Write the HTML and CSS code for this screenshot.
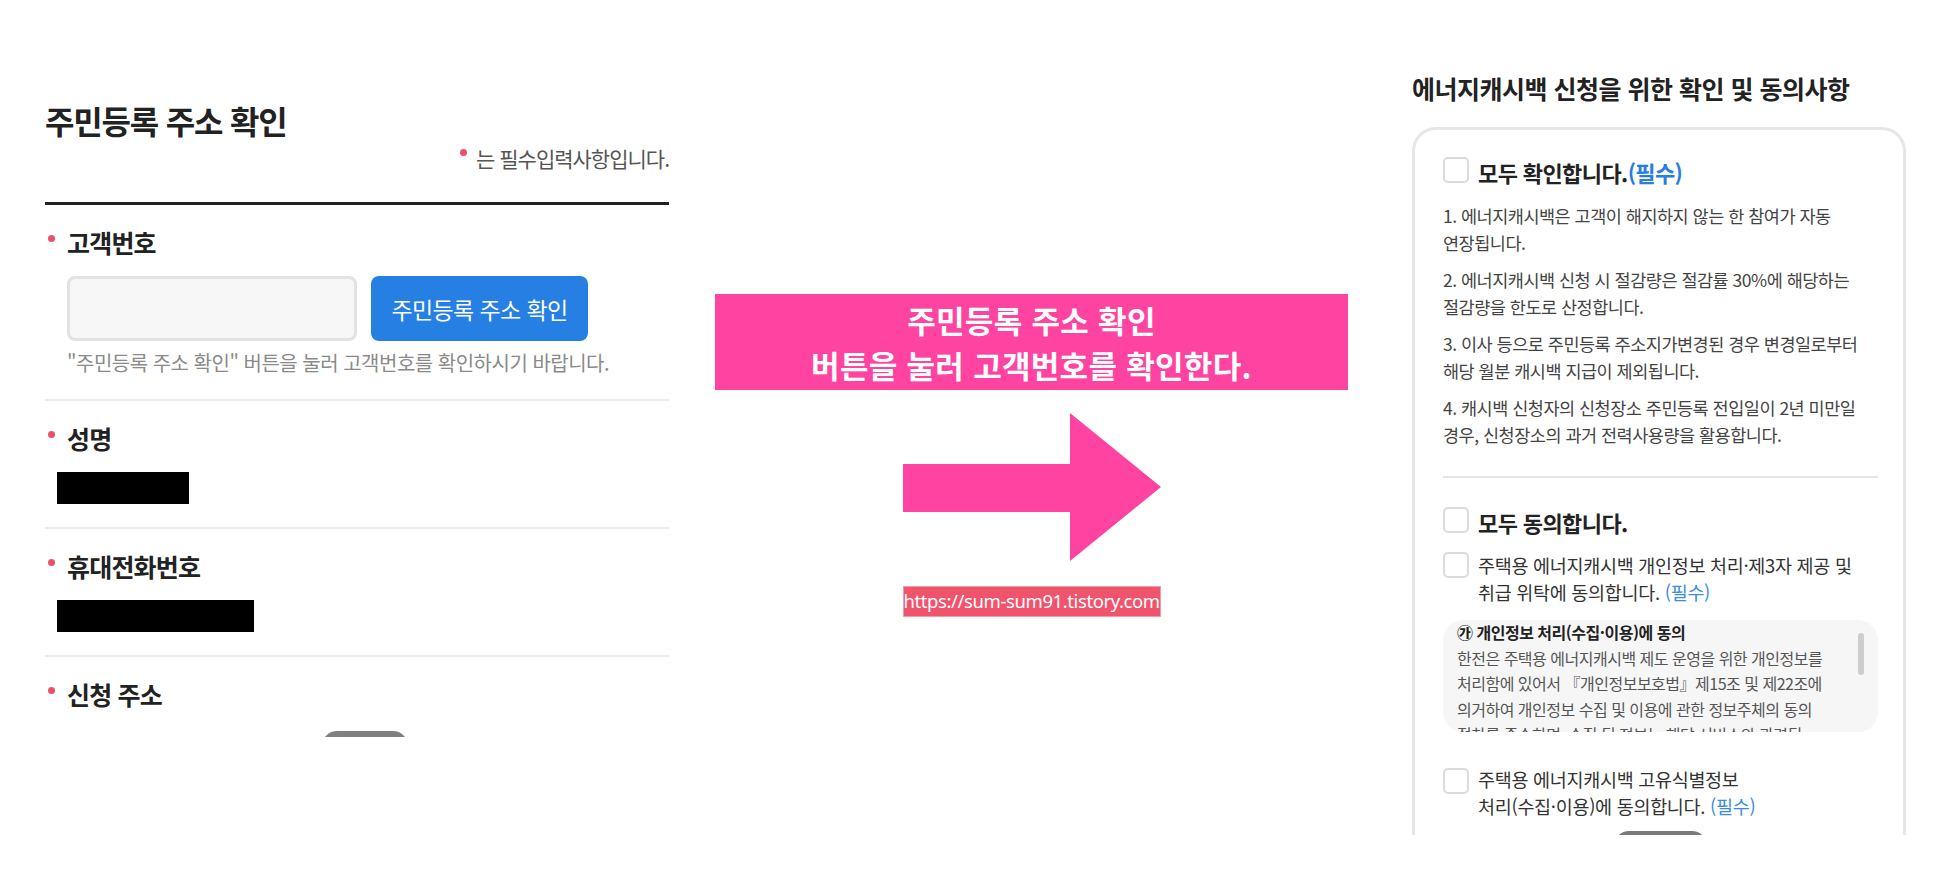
FILE: index.html
```html
<!DOCTYPE html>
<html lang="ko">
<head>
    <meta charset="UTF-8">
    <title>주민등록 주소 확인</title>
    <link rel="stylesheet" href="styles.css">
</head>
<body>
<div class="page">
    <!-- 왼쪽: 고객번호 입력 화면 -->
    <section class="form-shot">
        <h1 class="form-title">주민등록 주소 확인</h1>
        <div class="required-note"><span class="req-dot"></span>는 필수입력사항입니다.</div>

        <div class="form-body">
            <div class="field">
                <div class="field-label"><span class="req-dot"></span>고객번호</div>
                <div class="input-row">
                    <div class="text-input"></div>
                    <button class="check-btn">주민등록 주소 확인</button>
                </div>
                <p class="field-help">"주민등록 주소 확인" 버튼을 눌러 고객번호를 확인하시기 바랍니다.</p>
            </div>
            <div class="field">
                <div class="field-label"><span class="req-dot"></span>성명</div>
                <div class="masked masked-name"></div>
            </div>
            <div class="field">
                <div class="field-label"><span class="req-dot"></span>휴대전화번호</div>
                <div class="masked masked-phone"></div>
            </div>
            <div class="field field-last">
                <div class="field-label"><span class="req-dot"></span>신청 주소</div>
                <div class="address-pill"></div>
            </div>
        </div>
    </section>

    <!-- 가운데: 안내 문구와 화살표 -->
    <section class="guide">
        <div class="guide-banner">주민등록 주소 확인<br>버튼을 눌러 고객번호를 확인한다.</div>
        <svg class="guide-arrow" viewBox="0 0 258 148" width="258" height="148">
            <polygon points="0,51 167,51 167,0 258,74 167,148 167,99 0,99" fill="#ff43a0"/>
        </svg>
        <div class="source-tag">https://sum-sum91.tistory.com</div>
    </section>

    <!-- 오른쪽: 동의사항 화면 -->
    <section class="consent-shot">
        <h2 class="consent-title">에너지캐시백 신청을 위한 확인 및 동의사항</h2>
        <div class="consent-card">
            <div class="check-row">
                <span class="check-box"></span>
                <span class="check-title">모두 확인합니다.<span class="req-blue">(필수)</span></span>
            </div>
            <div class="notice">
                <p>1. 에너지캐시백은 고객이 해지하지 않는 한 참여가 자동<br>연장됩니다.</p>
                <p>2. 에너지캐시백 신청 시 절감량은 절감률 30%에 해당하는<br>절감량을 한도로 산정합니다.</p>
                <p>3. 이사 등으로 주민등록 주소지가변경된 경우 변경일로부터<br>해당 월분 캐시백 지급이 제외됩니다.</p>
                <p>4. 캐시백 신청자의 신청장소 주민등록 전입일이 2년 미만일<br>경우, 신청장소의 과거 전력사용량을 활용합니다.</p>
            </div>
            <div class="divider"></div>

            <div class="check-row row-agree-all">
                <span class="check-box"></span>
                <span class="check-title">모두 동의합니다.</span>
            </div>
            <div class="check-row row-item">
                <span class="check-box"></span>
                <span class="check-text">주택용 에너지캐시백 개인정보 처리·제3자 제공 및<br>취급 위탁에 동의합니다. <span class="req-link">(필수)</span></span>
            </div>
            <div class="terms-box">
                <div class="terms-title">㉮ 개인정보 처리(수집·이용)에 동의</div>
                <div class="terms-text">한전은 주택용 에너지캐시백 제도 운영을 위한 개인정보를<br>처리함에 있어서 『개인정보보호법』제15조 및 제22조에<br>의거하여 개인정보 수집 및 이용에 관한 정보주체의 동의<br>절차를 준수하며, 수집 된 정보는 해당 서비스와 관련된</div>
                <span class="terms-scroll"></span>
            </div>
            <div class="check-row row-last">
                <span class="check-box"></span>
                <span class="check-text">주택용 에너지캐시백 고유식별정보<br>처리(수집·이용)에 동의합니다. <span class="req-link">(필수)</span></span>
            </div>
            <div class="next-pill"></div>
        </div>
    </section>
</div>
</body>
</html>
```

FILE: styles.css
```css
body {
    margin: 0;
    background-color: #fff;
    font-family: "Noto Sans CJK KR", "Noto Sans", sans-serif;
    color: #222;
}

.page {
    display: flex;
    align-items: flex-start;
    width: 1960px;
    height: 888px;
    overflow: hidden;
}

/* ---------- left ---------- */

.form-shot {
    margin: 88px 0 0 45px;
    padding-top: 12px;
    width: 624px;
    height: 637px;
    overflow: hidden;
    flex: none;
}

.form-title {
    margin: 0;
    font-size: 32px;
    font-weight: 700;
    line-height: 40px;
    letter-spacing: -1.2px;
    color: #222;
}

.required-note {
    display: flex;
    justify-content: flex-end;
    align-items: flex-start;
    margin-top: 5px;
    font-size: 21px;
    line-height: 26px;
    letter-spacing: -1px;
    color: #555;
}

.required-note .req-dot {
    margin: 4px 9px 0 0;
}

.req-dot {
    display: block;
    flex: none;
    width: 7px;
    height: 7px;
    border-radius: 50%;
    background-color: #e8506e;
}

.form-body {
    margin-top: 31px;
    border-top: 3px solid #222;
}

.field {
    padding: 20px 0 23px;
    border-bottom: 2px solid #ececec;
}

.field-last {
    border-bottom: none;
}

.field-label {
    display: flex;
    align-items: flex-start;
    font-size: 25px;
    font-weight: 700;
    line-height: 34px;
    letter-spacing: -0.8px;
    color: #222;
}

.field-label .req-dot {
    margin: 10px 12px 0 3px;
}

.input-row {
    display: flex;
    gap: 14px;
    margin-top: 17px;
    padding-left: 22px;
}

.text-input {
    width: 290px;
    height: 65px;
    box-sizing: border-box;
    border: 3px solid #e2e2e2;
    border-radius: 8px;
    background-color: #f7f7f7;
}

.check-btn {
    width: 217px;
    height: 65px;
    border: none;
    border-radius: 8px;
    background-color: #2680e3;
    color: #fff;
    font-family: inherit;
    font-size: 23px;
    letter-spacing: -0.6px;
}

.field-help {
    margin: 9px 0 0 22px;
    font-size: 20px;
    line-height: 26px;
    letter-spacing: -0.5px;
    color: #8a8a8a;
    white-space: nowrap;
}

.masked {
    margin: 17px 0 0 12px;
    height: 32px;
    background-color: #000;
}

.masked-name {
    width: 132px;
}

.masked-phone {
    width: 197px;
}

.address-pill {
    margin: 20px 0 0 277px;
    width: 86px;
    height: 30px;
    border-radius: 15px;
    background-color: #808080;
}

/* ---------- middle ---------- */

.guide {
    display: flex;
    flex-direction: column;
    align-items: center;
    margin: 294px 0 0 46px;
    width: 633px;
    flex: none;
}

.guide-banner {
    width: 633px;
    height: 96px;
    box-sizing: border-box;
    padding-top: 3px;
    background-color: #ff43a0;
    color: #fff;
    font-size: 31px;
    font-weight: 700;
    line-height: 45px;
    letter-spacing: 0.3px;
    text-align: center;
}

.guide-arrow {
    display: block;
    margin-top: 23px;
}

.source-tag {
    margin-top: 25px;
    width: 258px;
    height: 31px;
    box-sizing: border-box;
    border: 1px solid #f59aa8;
    background-color: #f0546c;
    color: #fff;
    font-family: "Noto Sans", sans-serif;
    font-size: 18.5px;
    line-height: 28px;
    letter-spacing: -0.4px;
    text-align: center;
    white-space: nowrap;
}

/* ---------- right ---------- */

.consent-shot {
    margin: 72px 0 0 64px;
    width: 494px;
    flex: none;
}

.consent-title {
    margin: 0;
    font-size: 25px;
    font-weight: 700;
    line-height: 32px;
    letter-spacing: -0.5px;
    color: #222;
    white-space: nowrap;
}

.consent-card {
    margin-top: 23px;
    height: 708px;
    box-sizing: border-box;
    padding: 27px 25px 0 28px;
    border: 3px solid #e6e6e8;
    border-bottom: none;
    border-radius: 24px 24px 0 0;
    overflow: hidden;
}

.check-row {
    display: flex;
    align-items: flex-start;
    gap: 9px;
}

.check-box {
    display: block;
    flex: none;
    width: 26px;
    height: 26px;
    box-sizing: border-box;
    border: 2px solid #dcdcdc;
    border-radius: 5px;
    background-color: #fff;
}

.check-title {
    font-size: 22px;
    font-weight: 700;
    line-height: 30px;
    letter-spacing: -0.6px;
    color: #222;
    white-space: nowrap;
}

.req-blue {
    color: #2a7de1;
}

.notice {
    margin-top: 15px;
}

.notice p {
    margin: 0;
    font-size: 17.5px;
    line-height: 27px;
    letter-spacing: -0.5px;
    color: #444;
    white-space: nowrap;
}

.notice p + p {
    margin-top: 10px;
}

.divider {
    margin-top: 28px;
    height: 2px;
    background-color: #e6e6e6;
}

.row-agree-all {
    margin-top: 29px;
}

.row-item {
    margin-top: 15px;
}

.check-text {
    font-size: 18.5px;
    line-height: 27px;
    letter-spacing: -0.3px;
    color: #333;
    white-space: nowrap;
}

.req-link {
    color: #3d8be0;
}

.terms-box {
    position: relative;
    margin-top: 14px;
    height: 112px;
    padding: 0 14px;
    border-radius: 20px;
    background-color: #f6f6f7;
    overflow: hidden;
    font-size: 16px;
    line-height: 25.5px;
    letter-spacing: -0.5px;
    white-space: nowrap;
}

.terms-title {
    font-weight: 700;
    color: #222;
}

.terms-text {
    color: #555;
}

.terms-scroll {
    position: absolute;
    top: 13px;
    right: 14px;
    width: 6px;
    height: 42px;
    border-radius: 3px;
    background-color: #cdcdcd;
}

.row-last {
    margin-top: 34px;
}

.row-last .check-box {
    margin-top: 2px;
}

.next-pill {
    margin: 11px 0 0 171px;
    width: 93px;
    height: 30px;
    border-radius: 15px;
    background-color: #7a7a7a;
}
```
